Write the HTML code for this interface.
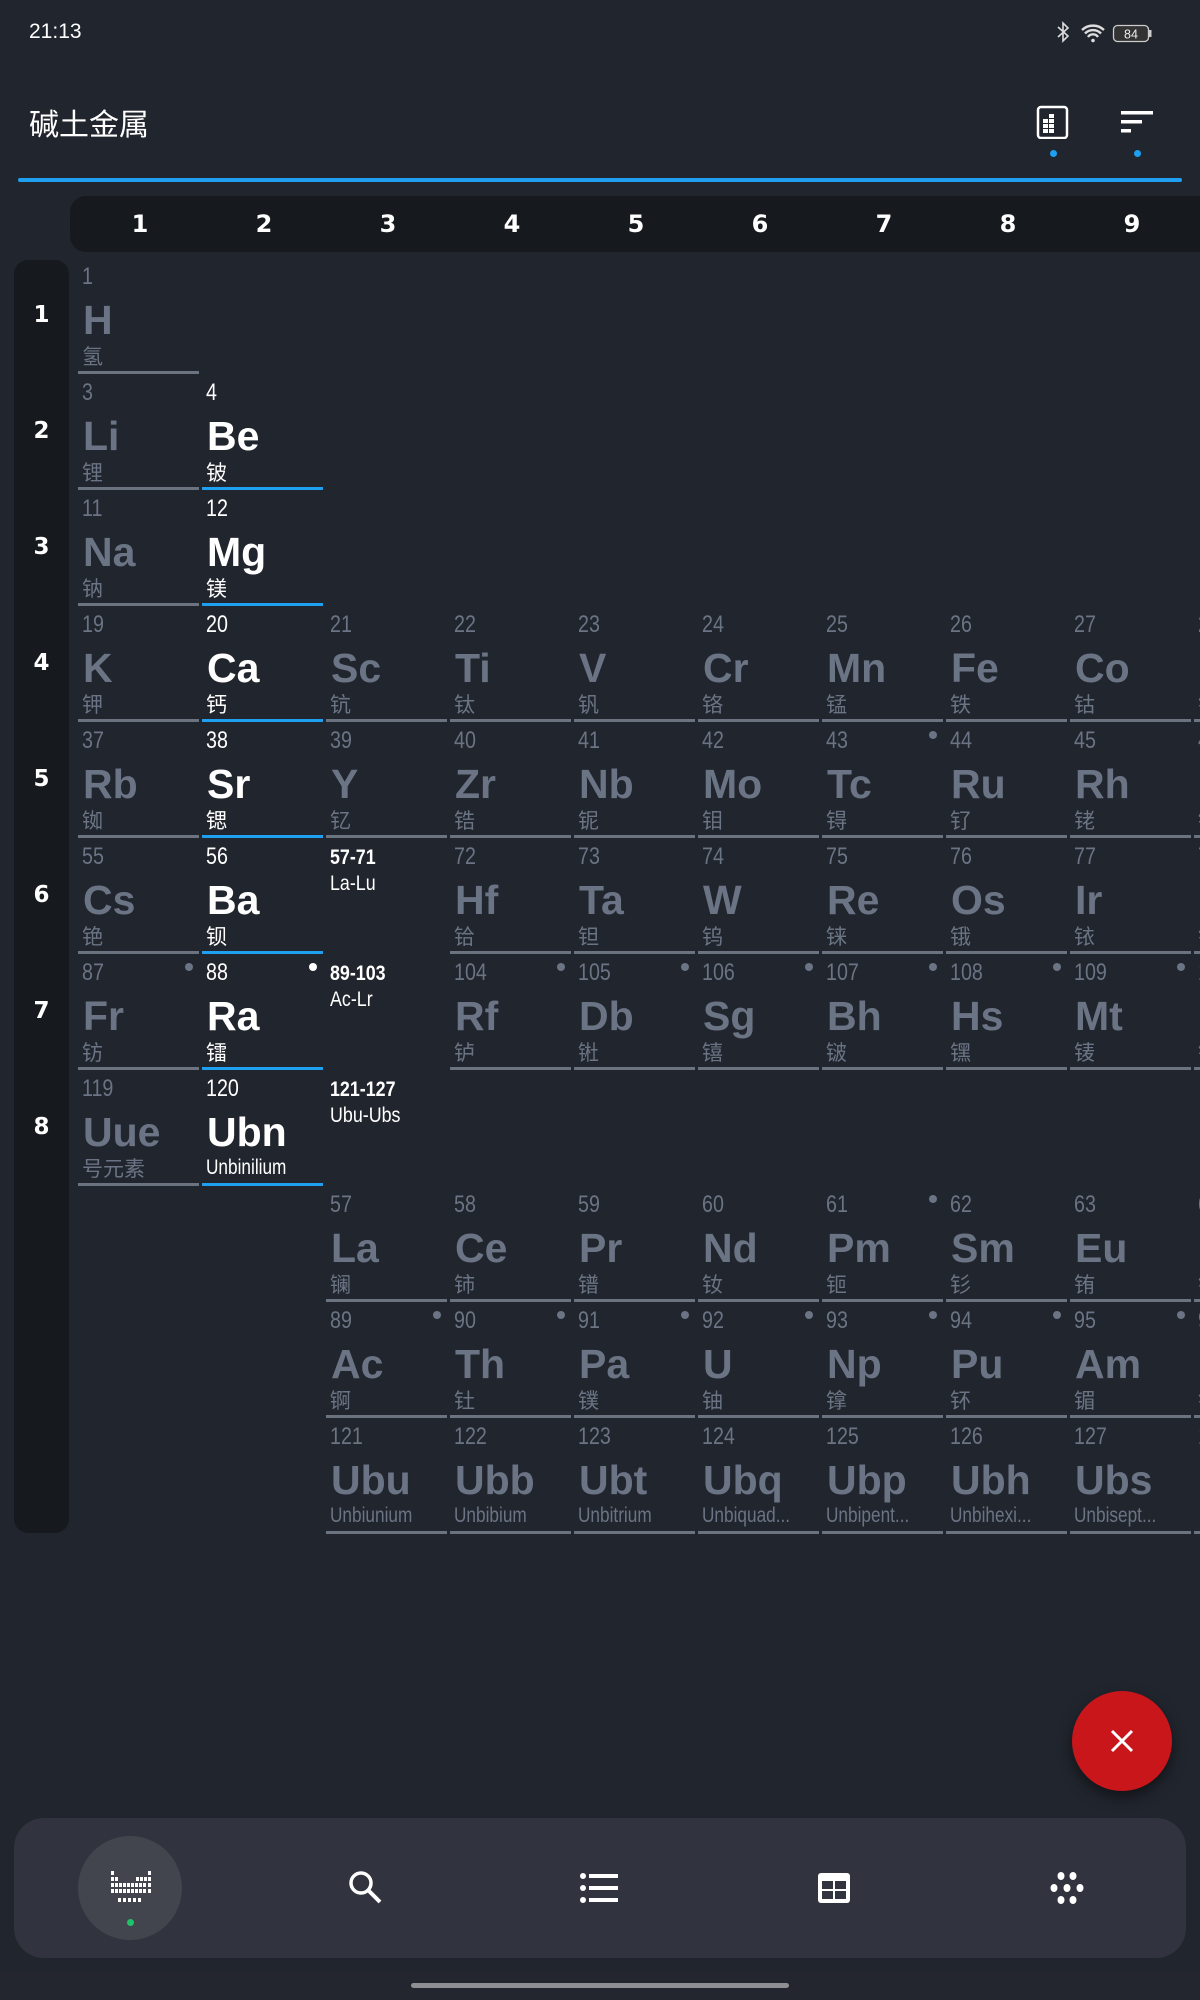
<!DOCTYPE html>
<html><head><meta charset="utf-8">
<style>
*{margin:0;padding:0;box-sizing:border-box}
body{width:1200px;height:2000px;background:#21252d;position:relative;overflow:hidden;font-family:"Liberation Sans","Noto Sans CJK SC",sans-serif;color:#fff}
.abs{position:absolute}
.c{position:absolute;width:121px;height:116px;color:#6b7484}
.c.x{width:6px;overflow:hidden}
.c::after{content:"";position:absolute;left:0;right:0;top:113px;height:3px;background:#6b7280}
.c.w{color:#fff}.c.w::after{background:#1e9ff0}
.c i{position:absolute;left:4px;top:7px;font-style:normal;font-family:"Liberation Sans Narrow","Liberation Sans",sans-serif;font-size:24px;line-height:24px;transform:scaleX(.82);transform-origin:0 0}
.c b{position:absolute;left:5px;top:42px;font-size:41px;line-height:41px;font-weight:bold}
.c s{position:absolute;left:4px;top:87px;text-decoration:none;font-family:"Noto Sans CJK SC",sans-serif;font-size:21px;line-height:22px;white-space:nowrap}
.c s.l{font-family:"Liberation Sans Narrow","Liberation Sans",sans-serif;font-size:21px;transform:scaleX(.82);transform-origin:0 0}
.c u{position:absolute;left:107px;top:9px;width:8px;height:8px;border-radius:50%;background:#6b7484}
.c.w u{background:#fff}
.lb{position:absolute;width:121px;height:116px;font-family:"Liberation Sans Narrow","Liberation Sans",sans-serif;color:#fff}
.lb em{position:absolute;left:4px;top:8px;font-style:normal;font-weight:bold;font-size:21px;transform:scaleX(.85);transform-origin:0 0;white-space:nowrap}
.lb span{position:absolute;left:4px;top:34px;font-size:21px;transform:scaleX(.85);transform-origin:0 0;white-space:nowrap}
.ch{position:absolute;top:196px;height:56px;width:124px;text-align:center;font-weight:bold;font-size:24px;line-height:56px;font-family:"DejaVu Sans",sans-serif}
.rh{position:absolute;left:14px;width:55px;text-align:center;font-weight:bold;font-size:23px;font-family:"DejaVu Sans",sans-serif}
</style></head><body>
<div class="abs" style="left:29px;top:20px;font-size:21px;font-family:'Liberation Sans Narrow','Liberation Sans',sans-serif;color:#fff">21:13</div>
<svg class="abs" style="left:1054px;top:21px" width="110" height="24" viewBox="0 0 110 24">
<path d="M4 6 L14 15 L9 20 V2 L14 7 L4 16" fill="none" stroke="#ddd" stroke-width="1.6"/>
<path d="M28 9 a16 16 0 0 1 22 0 M31 12.5 a11 11 0 0 1 16 0 M34 16 a6 6 0 0 1 10 0" fill="none" stroke="#ddd" stroke-width="2.4"/>
<circle cx="39" cy="19.5" r="1.8" fill="#ddd"/>
<rect x="59.5" y="4.5" width="35" height="16" rx="4" fill="#333" stroke="#ccc" stroke-width="1.3"/>
<rect x="95" y="9" width="2.5" height="7" fill="#ccc"/>
<text x="77" y="17.5" font-size="12.5" fill="#eee" text-anchor="middle" font-family="Liberation Sans">84</text>
</svg>
<div class="abs" style="left:29px;top:102px;font-size:30px;font-family:'Noto Sans CJK SC',sans-serif;color:#fff;line-height:40px">碱土金属</div>
<svg class="abs" style="left:1036px;top:105px" width="34" height="34" viewBox="0 0 34 34">
<rect x="2" y="2" width="29" height="31" rx="3" fill="none" stroke="#fff" stroke-width="2.5"/>
<g fill="#fff"><rect x="7" y="14" width="5" height="4"/><rect x="13" y="14" width="5" height="4"/><rect x="7" y="19" width="5" height="4"/><rect x="13" y="19" width="5" height="4"/><rect x="7" y="24" width="5" height="4"/><rect x="13" y="24" width="5" height="4"/><rect x="13" y="9" width="5" height="4"/></g>
</svg>
<div class="abs" style="left:1050px;top:150px;width:7px;height:7px;border-radius:50%;background:#1e9ff0"></div>
<svg class="abs" style="left:1121px;top:110px" width="34" height="24" viewBox="0 0 34 24">
<rect x="0" y="1" width="32" height="3.5" fill="#fff"/><rect x="0" y="10" width="21" height="3.5" fill="#fff"/><rect x="0" y="19" width="10" height="3.5" fill="#fff"/>
</svg>
<div class="abs" style="left:1134px;top:150px;width:7px;height:7px;border-radius:50%;background:#1e9ff0"></div>
<div class="abs" style="left:18px;top:178px;width:1164px;height:4px;border-radius:2px;background:#1e9ff0"></div>
<div class="abs" style="left:70px;top:196px;width:1130px;height:56px;background:#16191e;border-radius:16px 0 0 16px"></div>
<div class="ch" style="left:78px">1</div><div class="ch" style="left:202px">2</div><div class="ch" style="left:326px">3</div><div class="ch" style="left:450px">4</div><div class="ch" style="left:574px">5</div><div class="ch" style="left:698px">6</div><div class="ch" style="left:822px">7</div><div class="ch" style="left:946px">8</div><div class="ch" style="left:1070px">9</div>
<div class="abs" style="left:14px;top:260px;width:55px;height:1273px;background:#16191e;border-radius:14px"></div>
<div class="rh" style="top:302px">1</div><div class="rh" style="top:418px">2</div><div class="rh" style="top:534px">3</div><div class="rh" style="top:650px">4</div><div class="rh" style="top:766px">5</div><div class="rh" style="top:882px">6</div><div class="rh" style="top:998px">7</div><div class="rh" style="top:1114px">8</div>

<div class="c" style="left:78px;top:258px"><i>1</i><b>H</b><s>氢</s></div>
<div class="c" style="left:78px;top:374px"><i>3</i><b>Li</b><s>锂</s></div>
<div class="c w" style="left:202px;top:374px"><i>4</i><b>Be</b><s>铍</s></div>
<div class="c" style="left:78px;top:490px"><i>11</i><b>Na</b><s>钠</s></div>
<div class="c w" style="left:202px;top:490px"><i>12</i><b>Mg</b><s>镁</s></div>
<div class="c" style="left:78px;top:606px"><i>19</i><b>K</b><s>钾</s></div>
<div class="c w" style="left:202px;top:606px"><i>20</i><b>Ca</b><s>钙</s></div>
<div class="c" style="left:326px;top:606px"><i>21</i><b>Sc</b><s>钪</s></div>
<div class="c" style="left:450px;top:606px"><i>22</i><b>Ti</b><s>钛</s></div>
<div class="c" style="left:574px;top:606px"><i>23</i><b>V</b><s>钒</s></div>
<div class="c" style="left:698px;top:606px"><i>24</i><b>Cr</b><s>铬</s></div>
<div class="c" style="left:822px;top:606px"><i>25</i><b>Mn</b><s>锰</s></div>
<div class="c" style="left:946px;top:606px"><i>26</i><b>Fe</b><s>铁</s></div>
<div class="c" style="left:1070px;top:606px"><i>27</i><b>Co</b><s>钴</s></div>
<div class="c x" style="left:1194px;top:606px"><i>28</i><b>Ni</b><s>镍</s></div>
<div class="c" style="left:78px;top:722px"><i>37</i><b>Rb</b><s>铷</s></div>
<div class="c w" style="left:202px;top:722px"><i>38</i><b>Sr</b><s>锶</s></div>
<div class="c" style="left:326px;top:722px"><i>39</i><b>Y</b><s>钇</s></div>
<div class="c" style="left:450px;top:722px"><i>40</i><b>Zr</b><s>锆</s></div>
<div class="c" style="left:574px;top:722px"><i>41</i><b>Nb</b><s>铌</s></div>
<div class="c" style="left:698px;top:722px"><i>42</i><b>Mo</b><s>钼</s></div>
<div class="c" style="left:822px;top:722px"><i>43</i><b>Tc</b><s>锝</s><u></u></div>
<div class="c" style="left:946px;top:722px"><i>44</i><b>Ru</b><s>钌</s></div>
<div class="c" style="left:1070px;top:722px"><i>45</i><b>Rh</b><s>铑</s></div>
<div class="c x" style="left:1194px;top:722px"><i>46</i><b>Pd</b><s>钯</s></div>
<div class="c" style="left:78px;top:838px"><i>55</i><b>Cs</b><s>铯</s></div>
<div class="c w" style="left:202px;top:838px"><i>56</i><b>Ba</b><s>钡</s></div>
<div class="lb" style="left:326px;top:838px"><em>57-71</em><span>La-Lu</span></div>
<div class="c" style="left:450px;top:838px"><i>72</i><b>Hf</b><s>铪</s></div>
<div class="c" style="left:574px;top:838px"><i>73</i><b>Ta</b><s>钽</s></div>
<div class="c" style="left:698px;top:838px"><i>74</i><b>W</b><s>钨</s></div>
<div class="c" style="left:822px;top:838px"><i>75</i><b>Re</b><s>铼</s></div>
<div class="c" style="left:946px;top:838px"><i>76</i><b>Os</b><s>锇</s></div>
<div class="c" style="left:1070px;top:838px"><i>77</i><b>Ir</b><s>铱</s></div>
<div class="c x" style="left:1194px;top:838px"><i>78</i><b>Pt</b><s>铂</s></div>
<div class="c" style="left:78px;top:954px"><i>87</i><b>Fr</b><s>钫</s><u></u></div>
<div class="c w" style="left:202px;top:954px"><i>88</i><b>Ra</b><s>镭</s><u></u></div>
<div class="lb" style="left:326px;top:954px"><em>89-103</em><span>Ac-Lr</span></div>
<div class="c" style="left:450px;top:954px"><i>104</i><b>Rf</b><s>𬬻</s><u></u></div>
<div class="c" style="left:574px;top:954px"><i>105</i><b>Db</b><s>𬭊</s><u></u></div>
<div class="c" style="left:698px;top:954px"><i>106</i><b>Sg</b><s>𬭳</s><u></u></div>
<div class="c" style="left:822px;top:954px"><i>107</i><b>Bh</b><s>𬭛</s><u></u></div>
<div class="c" style="left:946px;top:954px"><i>108</i><b>Hs</b><s>𬭶</s><u></u></div>
<div class="c" style="left:1070px;top:954px"><i>109</i><b>Mt</b><s>鿏</s><u></u></div>
<div class="c x" style="left:1194px;top:954px"><i>110</i><b>Ds</b><s>𫟼</s></div>
<div class="c" style="left:78px;top:1070px"><i>119</i><b>Uue</b><s>号元素</s></div>
<div class="c w" style="left:202px;top:1070px"><i>120</i><b>Ubn</b><s class="l">Unbinilium</s></div>
<div class="lb" style="left:326px;top:1070px"><em>121-127</em><span>Ubu-Ubs</span></div>
<div class="c" style="left:326px;top:1186px"><i>57</i><b>La</b><s>镧</s></div>
<div class="c" style="left:450px;top:1186px"><i>58</i><b>Ce</b><s>铈</s></div>
<div class="c" style="left:574px;top:1186px"><i>59</i><b>Pr</b><s>镨</s></div>
<div class="c" style="left:698px;top:1186px"><i>60</i><b>Nd</b><s>钕</s></div>
<div class="c" style="left:822px;top:1186px"><i>61</i><b>Pm</b><s>钷</s><u></u></div>
<div class="c" style="left:946px;top:1186px"><i>62</i><b>Sm</b><s>钐</s></div>
<div class="c" style="left:1070px;top:1186px"><i>63</i><b>Eu</b><s>铕</s></div>
<div class="c x" style="left:1194px;top:1186px"><i>64</i><b>Gd</b><s>钆</s></div>
<div class="c" style="left:326px;top:1302px"><i>89</i><b>Ac</b><s>锕</s><u></u></div>
<div class="c" style="left:450px;top:1302px"><i>90</i><b>Th</b><s>钍</s><u></u></div>
<div class="c" style="left:574px;top:1302px"><i>91</i><b>Pa</b><s>镤</s><u></u></div>
<div class="c" style="left:698px;top:1302px"><i>92</i><b>U</b><s>铀</s><u></u></div>
<div class="c" style="left:822px;top:1302px"><i>93</i><b>Np</b><s>镎</s><u></u></div>
<div class="c" style="left:946px;top:1302px"><i>94</i><b>Pu</b><s>钚</s><u></u></div>
<div class="c" style="left:1070px;top:1302px"><i>95</i><b>Am</b><s>镅</s><u></u></div>
<div class="c x" style="left:1194px;top:1302px"><i>96</i><b>Cm</b><s>锔</s></div>
<div class="c" style="left:326px;top:1418px"><i>121</i><b>Ubu</b><s class="l">Unbiunium</s></div>
<div class="c" style="left:450px;top:1418px"><i>122</i><b>Ubb</b><s class="l">Unbibium</s></div>
<div class="c" style="left:574px;top:1418px"><i>123</i><b>Ubt</b><s class="l">Unbitrium</s></div>
<div class="c" style="left:698px;top:1418px"><i>124</i><b>Ubq</b><s class="l">Unbiquad...</s></div>
<div class="c" style="left:822px;top:1418px"><i>125</i><b>Ubp</b><s class="l">Unbipent...</s></div>
<div class="c" style="left:946px;top:1418px"><i>126</i><b>Ubh</b><s class="l">Unbihexi...</s></div>
<div class="c" style="left:1070px;top:1418px"><i>127</i><b>Ubs</b><s class="l">Unbisept...</s></div>
<div class="c x" style="left:1194px;top:1418px"><i>128</i><b>Ubo</b></div>

<div class="abs" style="left:1072px;top:1691px;width:100px;height:100px;border-radius:50%;background:#c8161a;box-shadow:0 6px 14px rgba(0,0,0,.5)"></div>
<svg class="abs" style="left:1108px;top:1727px" width="28" height="28" viewBox="0 0 28 28"><path d="M4 4 L24 24 M24 4 L4 24" stroke="#fff" stroke-width="3"/></svg>
<div class="abs" style="left:0;top:1972px;width:1200px;height:28px;background:#23262e"></div>
<div class="abs" style="left:14px;top:1818px;width:1172px;height:140px;border-radius:30px;background:#31343e"></div>
<div class="abs" style="left:78px;top:1836px;width:104px;height:104px;border-radius:50%;background:#42454e"></div>
<div class="abs" style="left:127px;top:1919px;width:7px;height:7px;border-radius:50%;background:#1ec26b"></div>
<svg class="abs" style="left:110px;top:1871px" width="42" height="34" viewBox="0 0 42 34" fill="#fff">
<rect x="1" y="0" width="3" height="4"/><rect x="38" y="0" width="3" height="4"/>
<rect x="1" y="6" width="3" height="4"/><rect x="5" y="6" width="3" height="4"/><rect x="26" y="6" width="3" height="4"/><rect x="30" y="6" width="3" height="4"/><rect x="34" y="6" width="3" height="4"/><rect x="38" y="6" width="3" height="4"/>
<g><rect x="1" y="12" width="3" height="4"/><rect x="5" y="12" width="3" height="4"/><rect x="9" y="12" width="3" height="4"/><rect x="13" y="12" width="3" height="4"/><rect x="17" y="12" width="3" height="4"/><rect x="21" y="12" width="3" height="4"/><rect x="25" y="12" width="3" height="4"/><rect x="29" y="12" width="3" height="4"/><rect x="33" y="12" width="3" height="4"/><rect x="38" y="12" width="3" height="4"/></g>
<g><rect x="1" y="18" width="3" height="4"/><rect x="5" y="18" width="3" height="4"/><rect x="9" y="18" width="3" height="4"/><rect x="13" y="18" width="3" height="4"/><rect x="17" y="18" width="3" height="4"/><rect x="21" y="18" width="3" height="4"/><rect x="25" y="18" width="3" height="4"/><rect x="29" y="18" width="3" height="4"/><rect x="33" y="18" width="3" height="4"/><rect x="38" y="18" width="3" height="4"/></g>
<rect x="8" y="27" width="3" height="4"/><rect x="13" y="27" width="3" height="4"/><rect x="18" y="27" width="3" height="4"/><rect x="23" y="27" width="3" height="4"/><rect x="28" y="27" width="3" height="4"/>
</svg>
<svg class="abs" style="left:348px;top:1870px" width="36" height="36" viewBox="0 0 36 36"><circle cx="13" cy="13" r="10" fill="none" stroke="#fff" stroke-width="3.5"/><path d="M20 20 L32 32" stroke="#fff" stroke-width="4"/></svg>
<svg class="abs" style="left:580px;top:1872px" width="38" height="32" viewBox="0 0 38 32" fill="#fff"><circle cx="3" cy="4" r="3"/><circle cx="3" cy="16" r="3"/><circle cx="3" cy="28" r="3"/><rect x="9" y="2" width="29" height="4"/><rect x="9" y="14" width="29" height="4"/><rect x="9" y="26" width="29" height="4"/></svg>
<svg class="abs" style="left:818px;top:1873px" width="32" height="30" viewBox="0 0 32 30"><rect x="0" y="0" width="32" height="30" rx="3" fill="#fff"/><rect x="4" y="8" width="11" height="8" fill="#31343e"/><rect x="17" y="8" width="11" height="8" fill="#31343e"/><rect x="4" y="18" width="11" height="8" fill="#31343e"/><rect x="17" y="18" width="11" height="8" fill="#31343e"/></svg>
<svg class="abs" style="left:1050px;top:1871px" width="34" height="34" viewBox="0 0 34 34" fill="#fff"><ellipse cx="11" cy="5" rx="3.5" ry="4"/><ellipse cx="23" cy="5" rx="3.5" ry="4"/><ellipse cx="4" cy="17" rx="3.5" ry="4"/><ellipse cx="17" cy="17" rx="3.5" ry="4"/><ellipse cx="30" cy="17" rx="3.5" ry="4"/><ellipse cx="11" cy="29" rx="3.5" ry="4"/><ellipse cx="23" cy="29" rx="3.5" ry="4"/></svg>
<div class="abs" style="left:411px;top:1983px;width:378px;height:5px;border-radius:3px;background:#8e8f93"></div>
</body></html>
